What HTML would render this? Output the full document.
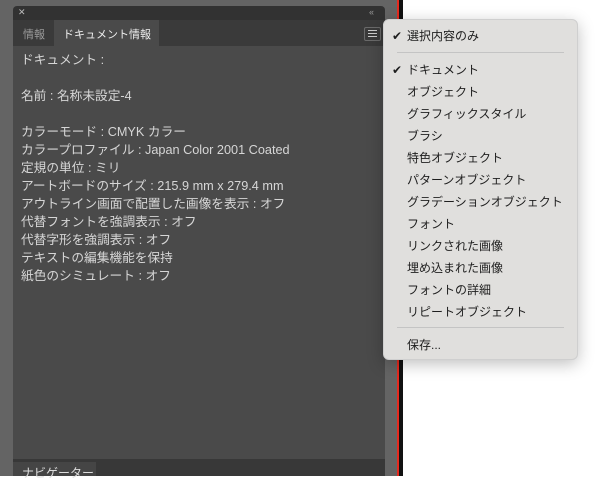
<!DOCTYPE html>
<html><head><meta charset="utf-8"><style>
*{margin:0;padding:0;box-sizing:border-box}
body{width:600px;height:476px;overflow:hidden;position:relative;background:#fff;font-family:"Liberation Sans","Noto Sans CJK JP",sans-serif}
.abs{position:absolute}
.t{position:absolute;left:21px;color:#d6d6d6;font-size:12.7px;line-height:18px;white-space:nowrap}
.m{position:absolute;left:407px;color:#1e1e1e;font-size:12px;line-height:22px;white-space:nowrap}
.ck{position:absolute;left:392px;color:#1e1e1e;font-size:12px;line-height:22px}
</style></head><body>
<div class="abs" style="left:0;top:0;width:397px;height:476px;background:#646464"></div>
<div class="abs" style="left:397px;top:0;width:2px;height:476px;background:#e52a1f"></div>
<div class="abs" style="left:399px;top:0;width:4px;height:476px;background:#111"></div>
<div class="abs" style="left:13px;top:6px;width:372px;height:460px;background:#323232;border-radius:4px 4px 0 0"></div>
<div class="abs" style="left:18px;top:7px;color:#bbb;font-size:9px">✕</div>
<div class="abs" style="left:369px;top:7px;color:#999;font-size:9px;letter-spacing:-1px">‹‹</div>
<div class="abs" style="left:13px;top:20px;width:372px;height:26px;background:#3a3a3a"></div>
<div class="abs" style="left:23px;top:26px;color:#9a9a9a;font-size:11px">情報</div>
<div class="abs" style="left:54px;top:20px;width:105px;height:27px;background:#4a4a4a"></div>
<div class="abs" style="left:63px;top:26px;color:#eee;font-size:11px">ドキュメント情報</div>
<div class="abs" style="left:364px;top:27px;width:17px;height:14px;border:1px solid #6a6a6a;border-radius:2px;background:#3a3a3a"></div>
<div class="abs" style="left:368px;top:30px;width:9px;height:7px;border-top:1px solid #ccc;border-bottom:1px solid #ccc"></div>
<div class="abs" style="left:368px;top:33px;width:9px;height:1px;background:#ccc"></div>
<div class="abs" style="left:13px;top:46px;width:372px;height:413px;background:#4a4a4a"></div>
<div class="abs" style="left:13px;top:459px;width:372px;height:17px;background:#383838"></div>
<div class="abs" style="left:13px;top:462px;width:83px;height:14px;background:#454545"></div>
<div class="abs" style="left:22px;top:464px;color:#ddd;font-size:12px">ナビゲーター</div>
<div class="t" style="top:51px">ドキュメント :</div>
<div class="t" style="top:87px">名前 : 名称未設定-4</div>
<div class="t" style="top:123px">カラーモード : CMYK カラー</div>
<div class="t" style="top:141px">カラープロファイル : Japan Color 2001 Coated</div>
<div class="t" style="top:159px">定規の単位 : ミリ</div>
<div class="t" style="top:177px">アートボードのサイズ : 215.9 mm x 279.4 mm</div>
<div class="t" style="top:195px">アウトライン画面で配置した画像を表示 : オフ</div>
<div class="t" style="top:213px">代替フォントを強調表示 : オフ</div>
<div class="t" style="top:231px">代替字形を強調表示 : オフ</div>
<div class="t" style="top:249px">テキストの編集機能を保持</div>
<div class="t" style="top:267px">紙色のシミュレート : オフ</div>
<div class="abs" style="left:383px;top:19px;width:195px;height:341px;background:#e0dfdd;border-radius:6px;box-shadow:0 4px 16px rgba(0,0,0,.25);border:1px solid #cfcfcf"></div>
<div class="abs" style="left:397px;top:52px;width:167px;height:1px;background:#c4c4c4"></div>
<div class="abs" style="left:397px;top:327px;width:167px;height:1px;background:#c4c4c4"></div>
<div class="ck" style="top:25px">✔</div>
<div class="m" style="top:25px">選択内容のみ</div>
<div class="ck" style="top:59px">✔</div>
<div class="m" style="top:59px">ドキュメント</div>
<div class="m" style="top:81px">オブジェクト</div>
<div class="m" style="top:103px">グラフィックスタイル</div>
<div class="m" style="top:125px">ブラシ</div>
<div class="m" style="top:147px">特色オブジェクト</div>
<div class="m" style="top:169px">パターンオブジェクト</div>
<div class="m" style="top:191px">グラデーションオブジェクト</div>
<div class="m" style="top:213px">フォント</div>
<div class="m" style="top:235px">リンクされた画像</div>
<div class="m" style="top:257px">埋め込まれた画像</div>
<div class="m" style="top:279px">フォントの詳細</div>
<div class="m" style="top:301px">リピートオブジェクト</div>
<div class="m" style="top:334px">保存...</div>
</body></html>
